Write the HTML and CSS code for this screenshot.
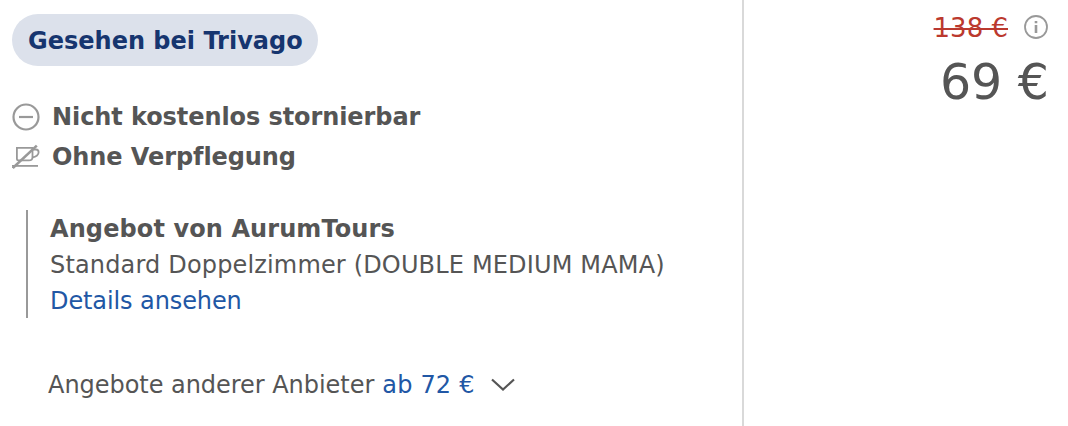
FILE: index.html
```
<!DOCTYPE html>
<html lang="de">
<head>
    <meta charset="UTF-8">
    <meta name="viewport" content="width=device-width, initial-scale=1.0">
    <title>Hotelangebot</title>
    <link rel="stylesheet" href="styles.css">
</head>
<body>
    <div class="offer">
        <div class="offer-info">
            <span class="badge">Gesehen bei Trivago</span>

            <ul class="features">
                <li class="feature">
                    <svg class="feature-icon" viewBox="0 0 28 28" fill="none" stroke="#999" stroke-width="2.2">
                        <circle cx="14" cy="14" r="12.5"/>
                        <path d="M7 14h14"/>
                    </svg>
                    <span>Nicht kostenlos stornierbar</span>
                </li>
                <li class="feature">
                    <svg class="feature-icon" viewBox="0 0 28 28" fill="none" stroke="#999" stroke-width="1.8">
                        <path d="M4.900 4.900h15.600v9q0 3.500-3.500 3.500h-10.500q-1.600 0-1.600-1.600z"/>
                        <path d="M20.500 6.500h3.500q2.600 0 2.600 2.800q0 4-6.600 5.200"/>
                        <path d="M0 22.900h26"/>
                        <path d="M0.800 25L24.800 2.600" stroke-width="2.600"/>
                    </svg>
                    <span>Ohne Verpflegung</span>
                </li>
            </ul>

            <div class="provider">
                <p class="provider-name">Angebot von AurumTours</p>
                <p class="room">Standard Doppelzimmer (DOUBLE MEDIUM MAMA)</p>
                <a class="details" href="#">Details ansehen</a>
            </div>

            <div class="more">
                <span class="more-label">Angebote anderer Anbieter</span>
                <a class="more-price" href="#">ab 72 €</a>
                <svg class="chevron" viewBox="0 0 24 14" fill="none" stroke="#555" stroke-width="2.2">
                    <path d="M1 1.500l11 10 11-10"/>
                </svg>
            </div>
        </div>

        <div class="offer-price">
            <div class="old">
                <s class="old-price">138 €</s>
                <svg class="info" viewBox="0 0 24 24" fill="none" stroke="#999" stroke-width="1.8">
                    <circle cx="12" cy="12" r="11"/>
                    <path d="M12 10v8M12 6v2.300" stroke-width="2.600"/>
                </svg>
            </div>
            <div class="price">69 €</div>
        </div>
    </div>
</body>
</html>
```
FILE: styles.css
```
* {
    margin: 0;
    padding: 0;
    box-sizing: border-box;
}

body {
    font-family: Verdana, 'DejaVu Sans', sans-serif;
    font-size: 24px;
    line-height: 36px;
    font-variant-ligatures: none;
    background: white;
    color: #555;
}

a {
    color: #2157a5;
    text-decoration: none;
}

.offer {
    display: flex;
    height: 426px;
    overflow: hidden;
    white-space: nowrap;
}

.offer-info {
    width: 744px;
    padding: 14px 12px 0;
    border-right: 2px solid #d9d9d9;
}

.badge {
    display: block;
    width: 306px;
    padding: 9px 0 7px 16px;
    border-radius: 26px;
    background: #dce1eb;
    color: #16356f;
    font-weight: bold;
}

.features {
    list-style: none;
    margin-top: 31px;
}

.feature {
    display: flex;
    align-items: center;
    gap: 12px;
    height: 40px;
    font-weight: bold;
    letter-spacing: -0.08px;
}

.feature-icon {
    width: 28px;
    height: 28px;
}

.provider {
    height: 108px;
    margin: 33px 0 0 14px;
    padding: 1px 0 0 22px;
    border-left: 2px solid #999;
}

.provider-name {
    font-weight: bold;
    letter-spacing: 0.1px;
}

.room {
    letter-spacing: 0.16px;
}

.details {
    display: block;
    letter-spacing: -0.1px;
}

.more {
    display: flex;
    align-items: center;
    margin: 49px 0 0 36px;
}

.more-label {
    letter-spacing: -0.04px;
}

.more-price {
    margin-left: 8px;
    letter-spacing: 0.2px;
}

.chevron {
    width: 24px;
    height: 14px;
    margin-left: 16px;
}

/* Preisspalte */
.offer-price {
    flex: 1;
    padding: 9px 19px 0 0;
    text-align: right;
}

.old {
    display: flex;
    align-items: center;
    justify-content: flex-end;
    gap: 16px;
    padding-right: 1px;
}

.old-price {
    padding-top: 2px;
    color: #bb392e;
    font-size: 26px;
    line-height: 34px;
    text-decoration-thickness: 2px;
}

.info {
    width: 24px;
    height: 24px;
}

.price {
    font-size: 49px;
    line-height: 75px;
}
```
